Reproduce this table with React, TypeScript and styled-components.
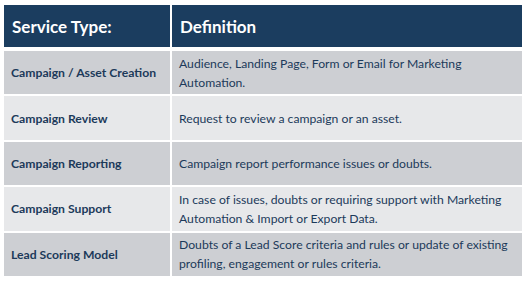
import React from "react";
import styled, { createGlobalStyle } from "styled-components";

const rows = [
  {
    type: "Campaign / Asset Creation",
    def: "Audience, Landing Page, Form or Email for Marketing Automation.",
  },
  { type: "Campaign Review", def: "Request to review a campaign or an asset." },
  {
    type: "Campaign Reporting",
    def: "Campaign report performance issues or doubts.",
  },
  {
    type: "Campaign Support",
    def: "In case of issues, doubts or requiring support with Marketing Automation & Import or Export Data.",
  },
  {
    type: "Lead Scoring Model",
    def: "Doubts of a Lead Score criteria and rules or update of existing profiling, engagement or rules criteria.",
  },
];

const App = () => {
  return (
    <Page>
      <GlobalStyle />
      <Table>
        <HeadCell>Service Type:</HeadCell>
        <HeadCell>Definition</HeadCell>
        {rows.map((r, i) => (
          <React.Fragment key={r.type}>
            <TypeCell $dark={i % 2 === 0}>{r.type}</TypeCell>
            <DefCell $dark={i % 2 === 0}>{r.def}</DefCell>
          </React.Fragment>
        ))}
      </Table>
    </Page>
  );
};

export default App;

const GlobalStyle = createGlobalStyle`
  body {
    margin: 0;
    background: #fff;
  }
`;

const Page = styled.div`
  width: 527px;
  height: 282px;
  padding: 5px 0 0 4px;
  box-sizing: border-box;
  font-family: "Lato", "Open Sans", sans-serif;
`;

const Table = styled.div`
  width: 518px;
  display: grid;
  grid-template-columns: 166px 1fr;
  grid-template-rows: 44px repeat(5, 43.4px);
  column-gap: 2px;
  row-gap: 2px;
`;

const HeadCell = styled.div`
  align-self: start;
  height: 42px;
  background: #1b3d5f;
  color: #fff;
  font-size: 17px;
  font-weight: 700;
  display: flex;
  align-items: center;
  padding: 1px 8px 0;
  box-sizing: border-box;
`;

const Cell = styled.div<{ $dark: boolean }>`
  background: ${(p) => (p.$dark ? "#cdcfd3" : "#e7e8ea")};
  color: #1c3a5a;
  display: flex;
  align-items: center;
  font-size: 12.2px;
  line-height: 19px;
`;

const TypeCell = styled(Cell)`
  font-weight: 700;
  padding: 0 7px;
`;

const DefCell = styled(Cell)`
  padding: 0 7px;
`;
